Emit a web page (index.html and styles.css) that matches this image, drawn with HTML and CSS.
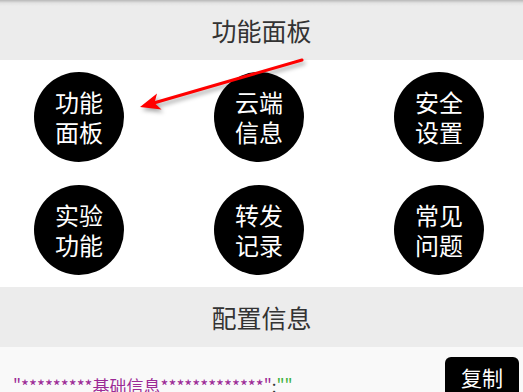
FILE: index.html
```html
<!DOCTYPE html>
<html lang="zh-CN">
<head>
<meta charset="utf-8">
<title>功能面板</title>
<link rel="stylesheet" href="styles.css">
</head>
<body>
<div class="page">
  <div class="section-head top">功能面板</div>
  <div class="panel">
    <div class="btn-circle">功能<br>面板</div>
    <div class="btn-circle">云端<br>信息</div>
    <div class="btn-circle">安全<br>设置</div>
    <div class="btn-circle">实验<br>功能</div>
    <div class="btn-circle">转发<br>记录</div>
    <div class="btn-circle">常见<br>问题</div>
  </div>
  <div class="section-head">配置信息</div>
  <div class="config">
    <div class="json"><span class="key">"*********基础信息*************"</span><span class="colon">:</span><span class="str">""</span></div>
    <div class="copy">复制</div>
  </div>
  <svg class="arrow" width="523" height="392" viewBox="0 0 523 392">
    <line x1="302" y1="60" x2="152" y2="103.5" stroke="#ff0000" stroke-width="3" stroke-linecap="round"/>
    <polygon points="140,107 157,93.5 154.5,103 161.5,109.5" fill="#ff0000"/>
  </svg>
</div>
</body>
</html>
```

FILE: styles.css
```css
* { box-sizing: border-box; }
html, body { margin: 0; padding: 0; }
body {
  width: 523px;
  height: 392px;
  overflow: hidden;
  font-family: "Noto Sans CJK SC", "Noto Sans", sans-serif;
  background: #f9f9f9;
}
.page { position: relative; }
.section-head {
  height: 60px;
  line-height: 60px;
  background: #ececec;
  color: #333;
  font-size: 25px;
  text-align: center;
}
.section-head.top {
  background: linear-gradient(to bottom, #b8b8b8 0, #e2e2e2 3px, #ececec 6px, #ececec 100%);
}
.panel {
  background: #fff;
  display: grid;
  grid-template-columns: repeat(3, 90px);
  column-gap: 90px;
  row-gap: 23px;
  padding: 12px 0 12px 34px;
}
.btn-circle {
  width: 90px;
  height: 90px;
  border-radius: 50%;
  background: #000;
  color: #fff;
  font-size: 24px;
  line-height: 30px;
  display: flex;
  align-items: center;
  justify-content: center;
  text-align: center;
}
.config {
  display: flex;
  justify-content: space-between;
  align-items: flex-start;
  padding: 10px 4px 0 13px;
  background: #f9f9f9;
}
.json {
  margin-top: 17px;
  font-size: 17px;
  line-height: 24px;
  white-space: nowrap;
}
.key { color: #9c2a96; }
.colon { color: #333; }
.str { color: #3cb13c; }
.copy {
  width: 74px;
  height: 44px;
  background: #000;
  color: #fff;
  border-radius: 6px;
  font-size: 21px;
  line-height: 40px;
  text-align: center;
}
.arrow {
  position: absolute;
  left: 0;
  top: 0;
  pointer-events: none;
  filter: drop-shadow(2px 3px 2px rgba(0,0,0,0.35));
}
```
